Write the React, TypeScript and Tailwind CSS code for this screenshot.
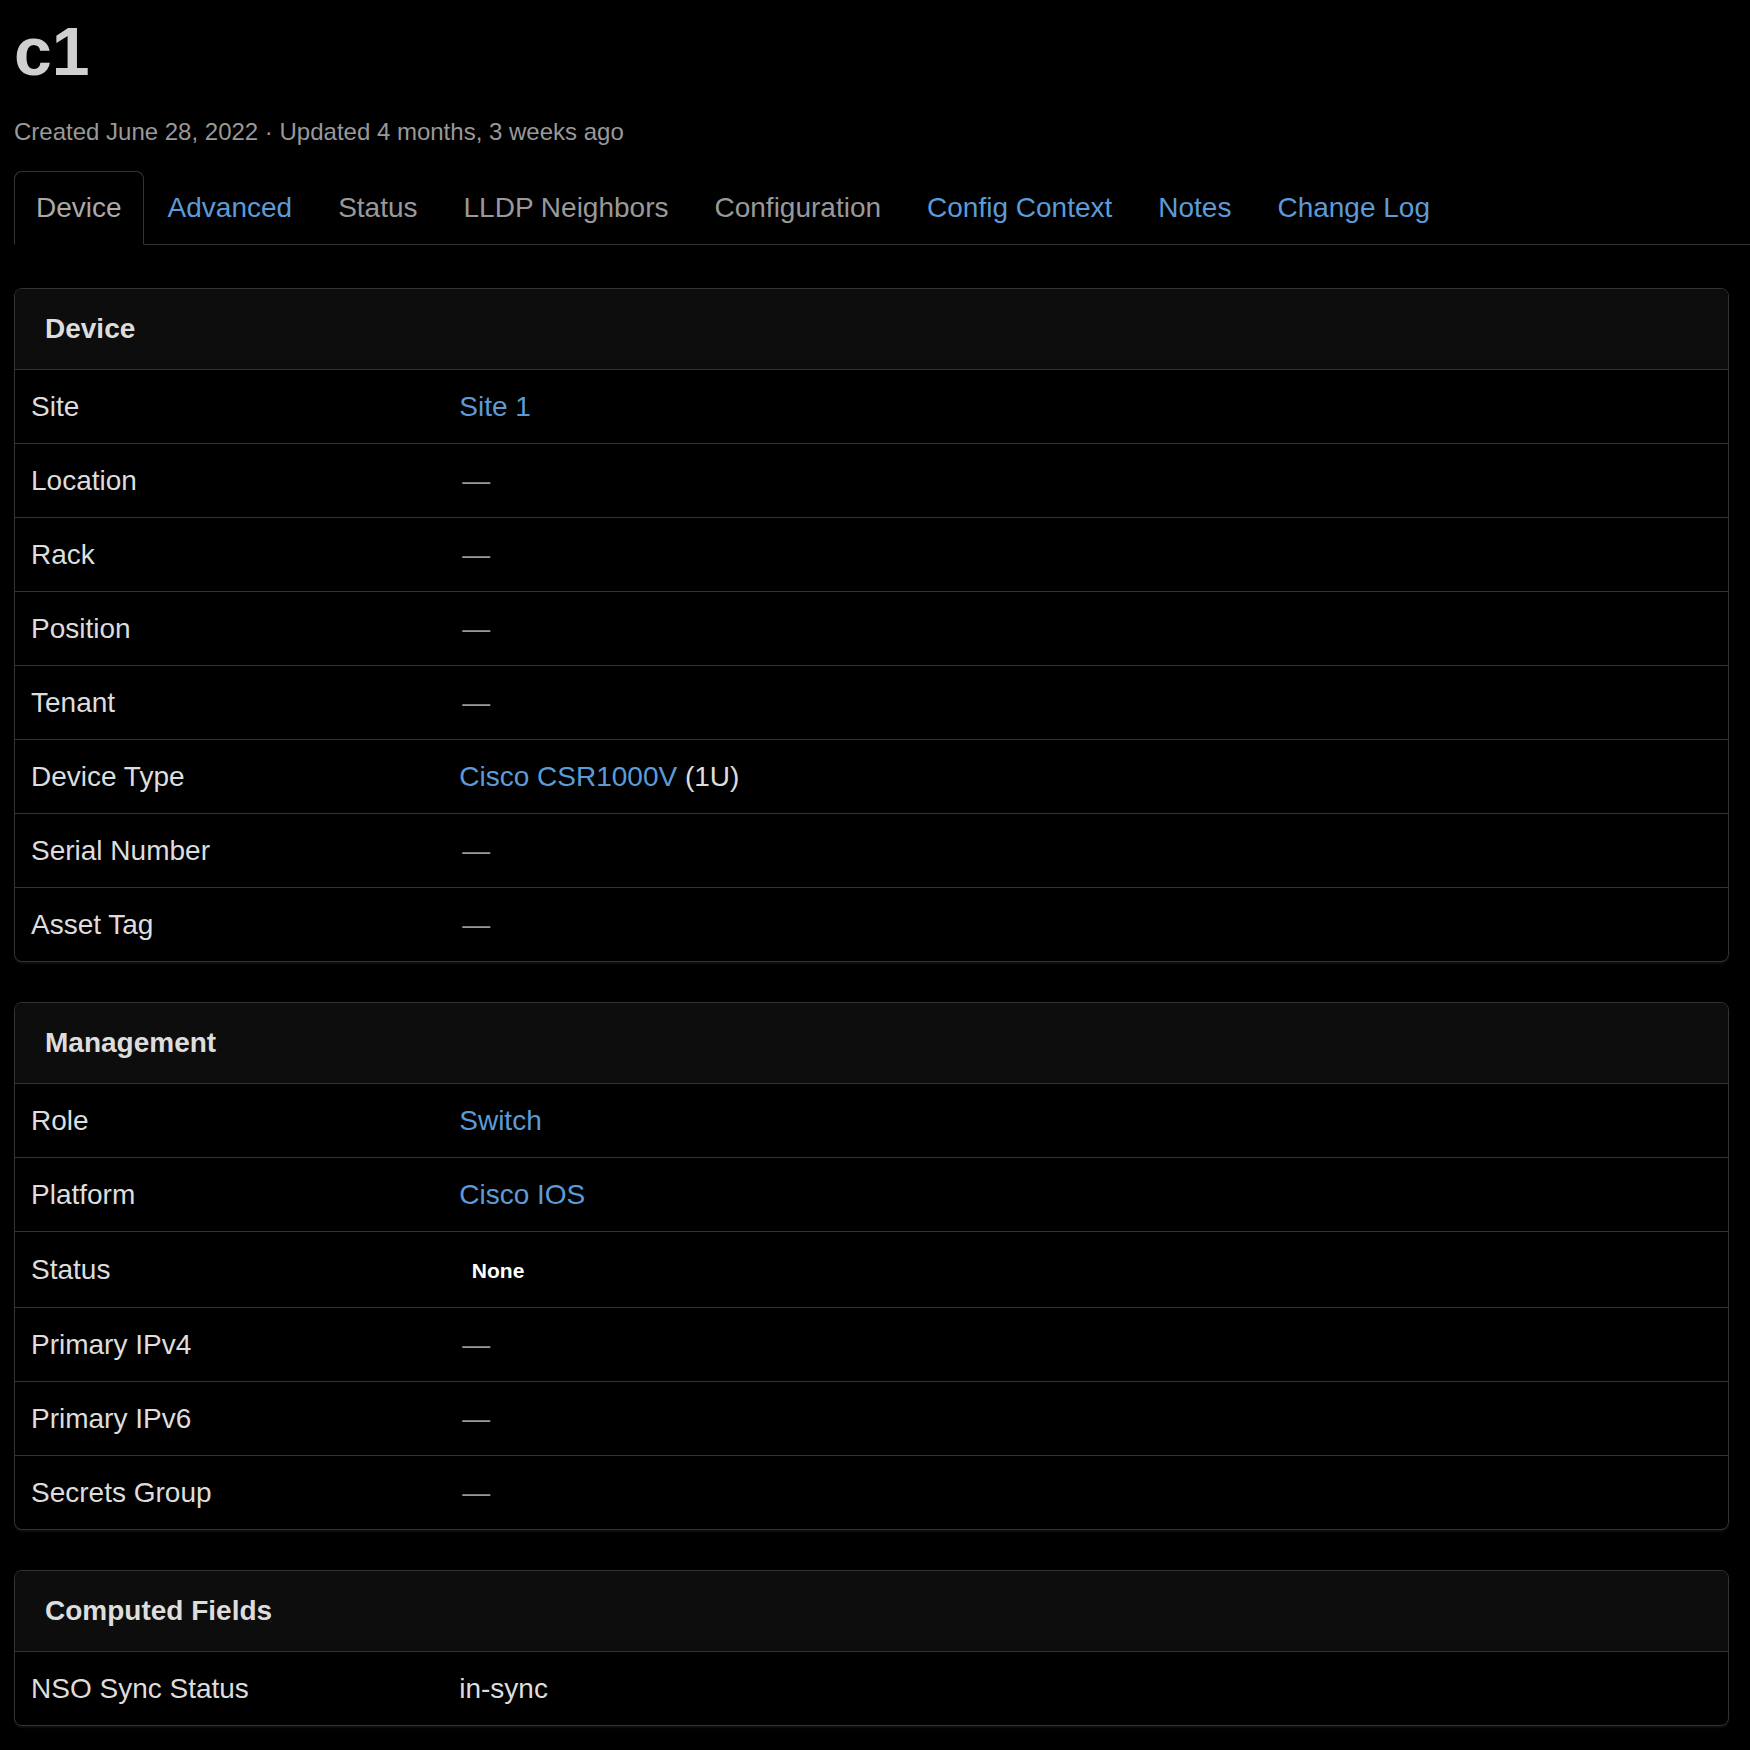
import React from "react";

type Row = {
  label: string;
  value: React.ReactNode;
};

const Dash = () => <span className="pl-[3px] text-[#999]">—</span>;

const Link = ({ children }: { children: React.ReactNode }) => (
  <a href="#" className="text-[#5b9bd8] hover:underline">
    {children}
  </a>
);

const deviceRows: Row[] = [
  { label: "Site", value: <Link>Site 1</Link> },
  { label: "Location", value: <Dash /> },
  { label: "Rack", value: <Dash /> },
  { label: "Position", value: <Dash /> },
  { label: "Tenant", value: <Dash /> },
  {
    label: "Device Type",
    value: (
      <>
        <Link>Cisco CSR1000V</Link> (1U)
      </>
    ),
  },
  { label: "Serial Number", value: <Dash /> },
  { label: "Asset Tag", value: <Dash /> },
];

const managementRows: Row[] = [
  { label: "Role", value: <Link>Switch</Link> },
  { label: "Platform", value: <Link>Cisco IOS</Link> },
  {
    label: "Status",
    value: (
      <span className="inline px-[12.6px] pt-[4px] pb-[6px] text-[21px] font-bold text-white align-baseline">
        None
      </span>
    ),
  },
  { label: "Primary IPv4", value: <Dash /> },
  { label: "Primary IPv6", value: <Dash /> },
  { label: "Secrets Group", value: <Dash /> },
];

const computedRows: Row[] = [{ label: "NSO Sync Status", value: "in-sync" }];

const tabs = [
  { name: "Device", color: "text-[#aaa]", active: true },
  { name: "Advanced", color: "text-[#5b9bd8]" },
  { name: "Status", color: "text-[#999]" },
  { name: "LLDP Neighbors", color: "text-[#999]" },
  { name: "Configuration", color: "text-[#999]" },
  { name: "Config Context", color: "text-[#5b9bd8]" },
  { name: "Notes", color: "text-[#5b9bd8]" },
  { name: "Change Log", color: "text-[#5b9bd8]" },
];

function Panel({ title, rows }: { title: string; rows: Row[] }) {
  return (
    <div className="mb-10 rounded-[8px] border border-[#333] bg-black shadow-[0_2px_2px_rgba(255,255,255,0.06)] overflow-hidden">
      <div className="bg-[#0d0d0d] border-b border-[#333] px-[30px] py-5 text-[28px] leading-[40px] font-bold text-[#ddd]">
        {title}
      </div>
      <table className="w-full border-collapse">
        <tbody>
          {rows.map((row, i) => (
            <tr key={row.label} className={i > 0 ? "border-t border-[#333]" : ""}>
              <td className="w-1/4 px-4 py-4 leading-[41px] text-[#ddd]">{row.label}</td>
              <td className="px-4 py-4 leading-[41px] text-[#ddd]">{row.value}</td>
            </tr>
          ))}
        </tbody>
      </table>
    </div>
  );
}

export default function App() {
  return (
    <div
      className="min-h-screen bg-black pl-[14px] text-[28px] text-[#ddd]"
      style={{ fontFamily: '"Liberation Sans", Arial, sans-serif' }}
    >
      <h1 className="pt-[13px] text-[68px] leading-[77px] font-bold text-[#d0d0d0]">c1</h1>
      <div className="mt-[25px] text-[24px] leading-[34px] text-[#999]">
        Created June 28, 2022 · Updated 4 months, 3 weeks ago
      </div>

      {/* Tabs */}
      <ul className="mt-[22px] flex border-b border-[#333]">
        {tabs.map((tab) => (
          <li key={tab.name} className="-mb-px mr-[2px]">
            <a
              href="#"
              className={
                "block rounded-t-[8px] border px-[21px] py-4 leading-[40px] " +
                tab.color +
                (tab.active ? " border-[#333] border-b-black bg-black" : " border-transparent")
              }
            >
              {tab.name}
            </a>
          </li>
        ))}
      </ul>

      <div className="mt-[43px] pr-[21px]">
        <Panel title="Device" rows={deviceRows} />
        <Panel title="Management" rows={managementRows} />
        <Panel title="Computed Fields" rows={computedRows} />
      </div>
    </div>
  );
}
